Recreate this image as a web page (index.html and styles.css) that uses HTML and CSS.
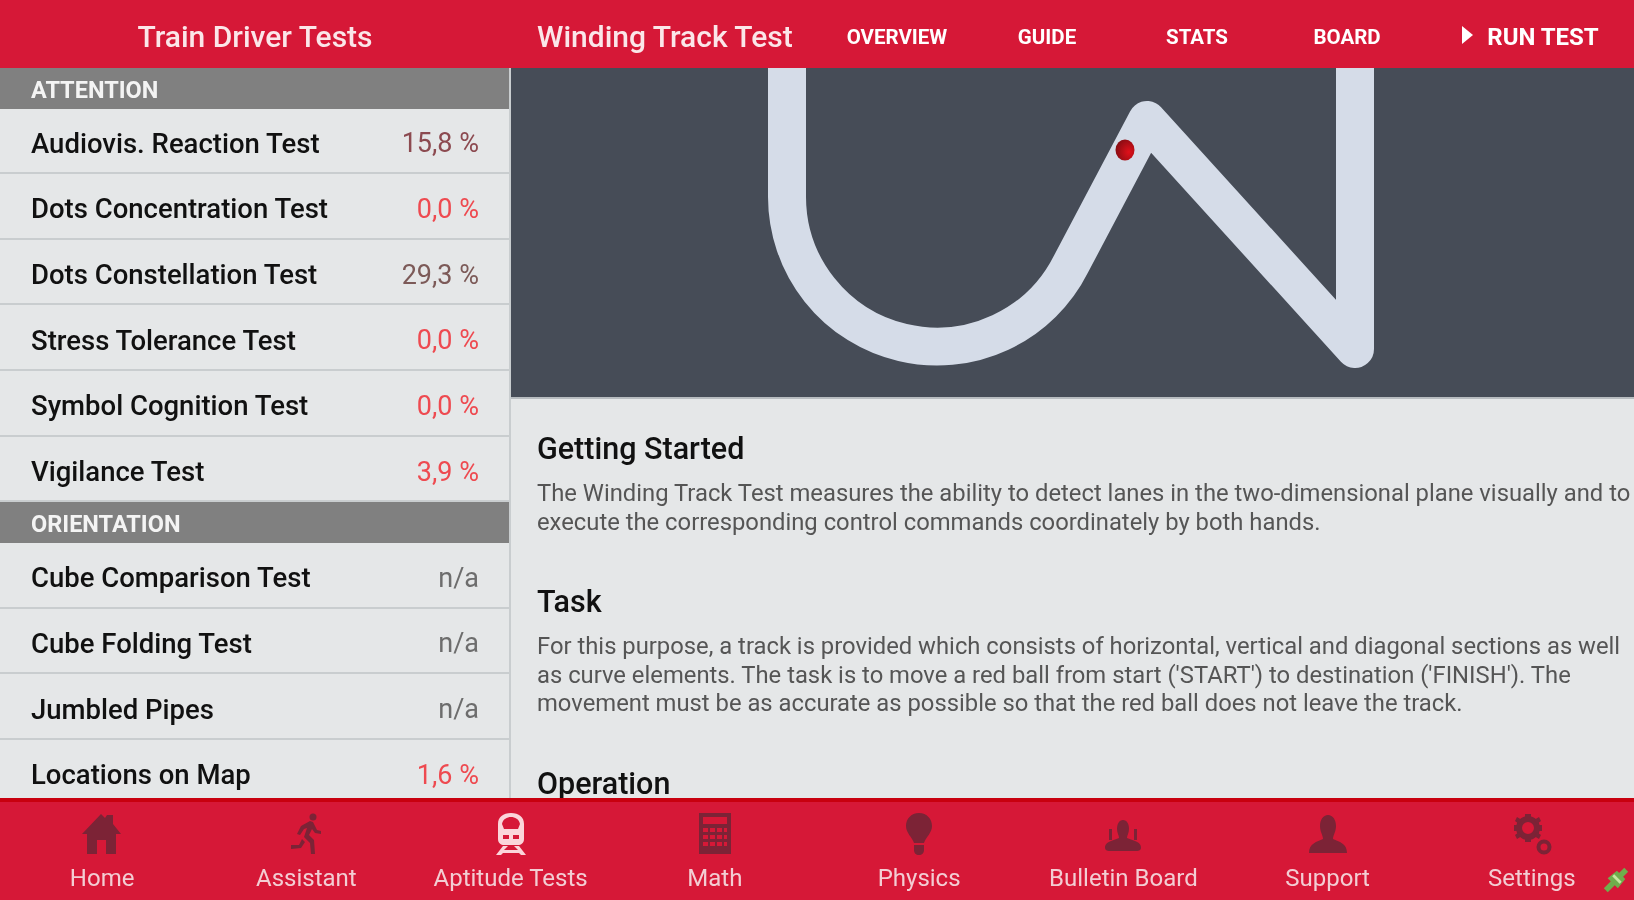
FILE: index.html
```html
<!DOCTYPE html>
<html lang="en">

<head>
    <meta charset="UTF-8">
    <title>Train Driver Tests</title>
    <link rel="stylesheet" href="styles.css">
</head>

<body>
    <div class="app">
        <header class="topbar">
            <div class="brand">Train Driver Tests</div>
            <div class="topbar-main">
                <div class="page-title">Winding Track Test</div>
                <nav class="tabs">
                    <span class="tab">OVERVIEW</span>
                    <span class="tab">GUIDE</span>
                    <span class="tab">STATS</span>
                    <span class="tab">BOARD</span>
                    <span class="tab tab-run"><span class="play"></span>RUN TEST</span>
                </nav>
            </div>
        </header>

        <div class="content">
            <aside class="sidebar">
                <div class="section-head"><span>ATTENTION</span></div>
                <div class="row"><span class="row-name">Audiovis. Reaction Test</span><span class="score score-mid">15,8 %</span></div>
                <div class="row"><span class="row-name">Dots Concentration Test</span><span class="score score-low">0,0 %</span></div>
                <div class="row"><span class="row-name">Dots Constellation Test</span><span class="score score-good">29,3 %</span></div>
                <div class="row"><span class="row-name">Stress Tolerance Test</span><span class="score score-low">0,0 %</span></div>
                <div class="row"><span class="row-name">Symbol Cognition Test</span><span class="score score-low">0,0 %</span></div>
                <div class="row"><span class="row-name">Vigilance Test</span><span class="score score-low">3,9 %</span></div>
                <div class="section-head"><span>ORIENTATION</span></div>
                <div class="row"><span class="row-name">Cube Comparison Test</span><span class="score">n/a</span></div>
                <div class="row"><span class="row-name">Cube Folding Test</span><span class="score">n/a</span></div>
                <div class="row"><span class="row-name">Jumbled Pipes</span><span class="score">n/a</span></div>
                <div class="row"><span class="row-name">Locations on Map</span><span class="score score-low">1,6 %</span></div>
            </aside>

            <main class="detail">
                <div class="hero">
                    <svg class="track" viewBox="511 68 1123 329">
                        <defs>
                            <radialGradient id="ball" cx="0.7" cy="0.6" r="0.8">
                                <stop offset="0" stop-color="#e0101a" />
                                <stop offset="1" stop-color="#7c0c12" />
                            </radialGradient>
                        </defs>
                        <path d="M787 60 V197 A150 150 0 0 0 1071 264 L1147 120 L1355 349 V60" fill="none" stroke="#d5dce8" stroke-width="38" stroke-linejoin="round" />
                        <ellipse cx="1125" cy="150" rx="9.5" ry="10.5" fill="url(#ball)" />
                    </svg>
                </div>
                <div class="article">
                    <h3>Getting Started</h3>
                    <p>The Winding Track Test measures the ability to detect lanes in the two-dimensional plane visually and to execute the corresponding control commands coordinately by both hands.</p>
                    <h3>Task</h3>
                    <p>For this purpose, a track is provided which consists of horizontal, vertical and diagonal sections as well as curve elements. The task is to move a red ball from start ('START') to destination ('FINISH'). The movement must be as accurate as possible so that the red ball does not leave the track.</p>
                    <h3>Operation</h3>
                </div>
            </main>
        </div>

        <footer class="bottombar">
            <div class="nav-item">
                <svg class="nav-icon" viewBox="0 0 44 44"><path d="M21 2 L25 6 L27 3 L33 3 L33 12 L41 22 L36 22 V42 H26 V28 H17 V42 H7 V22 H2 Z" /></svg>
                <span>Home</span>
            </div>
            <div class="nav-item">
                <svg class="nav-icon" viewBox="0 0 44 44"><circle cx="29" cy="5" r="3.5" /><path d="M26 9 L17 14 L13 22 L16 23 L20 17 L23 16 L20 25 L26 31 L27 42 L31 42 L30 28 L25 23 L28 17 L31 21 L37 22 L37 19 L33 18 L29 10 Z M18 27 L15 33 L7 33 L7 37 L17 36 L21 30 Z" /></svg>
                <span>Assistant</span>
            </div>
            <div class="nav-item nav-active">
                <svg class="nav-icon" viewBox="0 0 44 44"><path fill-rule="evenodd" d="M22 1 C30 1 35 5 35 12 V27 C35 31 32 33 29 33 H15 C12 33 9 31 9 27 V12 C9 5 14 1 22 1 Z M22 5 C18 5 14 7 13 12 L15 17 H29 L31 12 C30 7 26 5 22 5 Z M14 23 V27 H20 V23 Z M24 23 V27 H30 V23 Z" /><path d="M14 34 H19 L15 38 H29 L25 34 H30 L37 43 H32 L30 41 H14 L12 43 H7 Z" /></svg>
                <span>Aptitude Tests</span>
            </div>
            <div class="nav-item">
                <svg class="nav-icon" viewBox="0 0 44 44"><path fill-rule="evenodd" d="M6 1 H38 V42 H6 Z M10 5 V12 H34 V5 Z M10 16 V20 H15 V16 Z M17 16 V20 H22 V16 Z M24 16 V20 H29 V16 Z M31 16 V20 H34 V16 Z M10 23 V27 H15 V23 Z M17 23 V27 H22 V23 Z M24 23 V27 H29 V23 Z M31 23 V27 H34 V23 Z M10 30 V34 H15 V30 Z M17 30 V34 H22 V30 Z M24 30 V34 H29 V30 Z M31 30 V34 H34 V30 Z" /></svg>
                <span>Math</span>
            </div>
            <div class="nav-item">
                <svg class="nav-icon" viewBox="0 0 44 44"><path d="M22 1 C30 1 35 7 35 14 C35 21 29 25 27 31 H17 C15 25 9 21 9 14 C9 7 14 1 22 1 Z M17 33 H27 V38 C27 41 25 43 22 43 C19 43 17 41 17 38 Z" /></svg>
                <span>Physics</span>
            </div>
            <div class="nav-item">
                <svg class="nav-icon" viewBox="0 0 44 44"><path d="M22 8 C26 8 28 12 28 17 C28 21 26 23 26 26 L34 29 C39 31 40 33 40 36 C40 38 38 39 36 39 H8 C6 39 4 38 4 36 C4 33 5 31 10 29 L18 26 C18 23 16 21 16 17 C16 12 18 8 22 8 Z" /><path d="M8 17 H11 V28 H8 Z M33 17 H36 V28 H33 Z" /></svg>
                <span>Bulletin Board</span>
            </div>
            <div class="nav-item">
                <svg class="nav-icon" viewBox="0 0 44 44"><path d="M22 3 C27 3 30 8 30 14 C30 20 27 23 27 27 C33 30 41 31 41 41 H3 C3 31 11 30 17 27 C17 23 14 20 14 14 C14 8 17 3 22 3 Z" /></svg>
                <span>Support</span>
            </div>
            <div class="nav-item">
                <svg class="nav-icon" viewBox="0 0 44 44"><circle class="ring" cx="18" cy="16" r="9" stroke-width="6" /><path d="M15 2 H21 V8 H15 Z M15 24 H21 V30 H15 Z M4 13 H10 V19 H4 Z M26 13 H32 V19 H26 Z M7 5 L12 8 L9 12 L5 9 Z M29 5 L31 9 L27 12 L24 8 Z M5 23 L9 20 L12 24 L7 27 Z M27 20 L31 23 L29 27 L24 24 Z" /><circle class="ring" cx="34" cy="35" r="5.5" stroke-width="4" /></svg>
                <span>Settings</span>
            </div>
            <svg class="status-plug" viewBox="0 0 28 28"><path d="M3 25 L25 3" stroke="#6fae4c" stroke-width="6" /><path d="M5 12 L16 23 L24 13 L15 4 Z" fill="#6fae4c" /><path d="M11 9 L19 17" stroke="#c6e6a0" stroke-width="3" /></svg>
        </footer>
    </div>
</body>

</html>
```

FILE: styles.css
```css
* {
    box-sizing: border-box;
}

html,
body {
    margin: 0;
    height: 100%;
    overflow: hidden;
}

body {
    font-family: Roboto, "Liberation Sans", sans-serif;
    background: #e5e7e8;
    color: #111;
}

.app {
    display: flex;
    flex-direction: column;
    width: 1634px;
    height: 900px;
    overflow: hidden;
}

/* the reference is an upscaled capture, so text and drawings are a bit soft */
.brand,
.page-title,
.tab,
.section-head span,
.row span,
.article,
.nav-item,
.track path,
.track ellipse,
.status-plug {
    filter: blur(0.7px);
}

.topbar {
    display: flex;
    flex: 0 0 68px;
    align-items: center;
    padding-top: 5px;
    background: #d61837;
    color: #fff;
}

.brand {
    width: 511px;
    font-size: 30px;
    font-weight: 500;
    text-align: center;
    padding-right: 1px;
    color: #fbe6e9;
}

.topbar-main {
    display: flex;
    flex: 1;
    align-items: center;
    padding-left: 26px;
}

.page-title {
    width: 285px;
    font-size: 30px;
    font-weight: 500;
    color: #fbe6e9;
}

.tabs {
    display: flex;
    flex: 1;
    align-items: center;
}

.tab {
    width: 150px;
    font-size: 20.5px;
    font-weight: 700;
    text-align: center;
    white-space: nowrap;
}

.tab-run {
    display: flex;
    flex: 1;
    align-items: center;
    justify-content: center;
    gap: 14px;
    padding-left: 5px;
    font-size: 24px;
}

.play {
    width: 0;
    height: 0;
    margin-bottom: 4px;
    border-left: 11px solid #fff;
    border-top: 9px solid transparent;
    border-bottom: 9px solid transparent;
}

.content {
    display: flex;
    flex: 1;
    min-height: 0;
}

.sidebar {
    flex: 0 0 511px;
    border-right: 2px solid #c9cdcf;
    overflow: hidden;
}

.section-head {
    height: 40.5px;
    padding: 2px 0 0 31px;
    background: #808080;
    color: #f4f4f4;
    font-size: 23.5px;
    font-weight: 700;
    line-height: 40px;
}

.row {
    display: flex;
    align-items: center;
    justify-content: space-between;
    height: 65.67px;
    padding: 6px 30px 0 31px;
    border-bottom: 2px solid #c9cdcf;
    font-size: 27.5px;
    font-weight: 500;
}

.score {
    color: #6d6d6d;
    font-size: 27px;
    font-weight: 400;
}

.score-low {
    color: #ee4a50;
}

.score-mid {
    color: #8c4a50;
}

.score-good {
    color: #7c5a58;
}

.detail {
    display: flex;
    flex: 1;
    flex-direction: column;
    min-width: 0;
}

.hero {
    flex: 0 0 329px;
    background: #464c57;
    border-bottom: 2px solid #b8bcc0;
}

.track {
    display: block;
    width: 1123px;
    height: 329px;
}

.article {
    padding: 0 0 0 26px;
    overflow: hidden;
}

.article h3 {
    margin: 32px 0 13px;
    font-size: 30.5px;
    font-weight: 500;
    color: #111;
}

.article p {
    margin: 0 0 48px;
    font-size: 23.8px;
    line-height: 28.5px;
    color: #555;
}

.bottombar {
    position: relative;
    display: flex;
    flex: 0 0 102px;
    padding-top: 10px;
    background: #d61837;
    border-top: 4px solid #c8000f;
}

.nav-item {
    display: flex;
    flex: 0 0 204.25px;
    flex-direction: column;
    align-items: center;
    color: #f3cdd3;
    font-size: 24px;
}

.nav-item span {
    margin-top: 8px;
}

.nav-icon {
    width: 44px;
    height: 44px;
    fill: #7c2336;
    stroke: #7c2336;
    stroke-width: 0;
}

.nav-icon .ring {
    fill: none;
}

.nav-active .nav-icon {
    fill: #fbd5da;
    stroke: #fbd5da;
}

.status-plug {
    position: absolute;
    right: 5px;
    bottom: 7px;
    width: 26px;
    height: 26px;
}
```
